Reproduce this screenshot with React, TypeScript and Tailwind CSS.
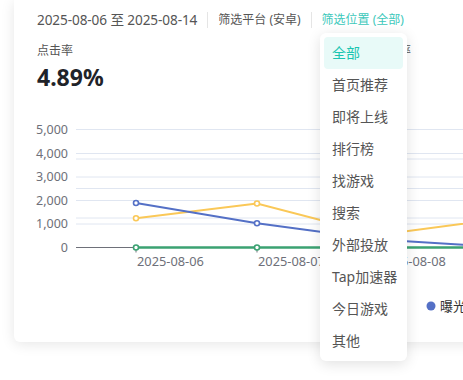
const FONT = { fontFamily: '"Noto Sans", "Noto Sans CJK SC", sans-serif' };

const positions = [
  "全部",
  "首页推荐",
  "即将上线",
  "排行榜",
  "找游戏",
  "搜索",
  "外部投放",
  "Tap加速器",
  "今日游戏",
  "其他",
];

const leftGrid = [130.5, 154.5, 178, 201.5, 225];
const rightGrid = [160, 189.5, 219];
const yLabels = ["5,000", "4,000", "3,000", "2,000", "1,000", "0"];
const xTicks = [136, 257, 378];

const blue = [
  [136, 204],
  [257, 224.3],
  [378, 240.5],
  [499, 248],
];
const yellow = [
  [136, 219.3],
  [257, 204.5],
  [378, 236],
  [499, 220],
];

const toPath = (pts: number[][]) => pts.map((p, i) => `${i ? "L" : "M"}${p[0]} ${p[1]}`).join(" ");

const Chart = () => {
  return (
    <svg width={449} height={210} viewBox="14 110 449 210" className="block" style={FONT}>
      {leftGrid.map((y) => (
        <line key={y} x1={76} x2={470} y1={y} y2={y} stroke="#e0e6f1" strokeWidth={1} />
      ))}
      {rightGrid.map((y) => (
        <line key={y} x1={76} x2={470} y1={y} y2={y} stroke="#e0e6f1" strokeWidth={1} />
      ))}
      <line x1={76} x2={470} y1={248.5} y2={248.5} stroke="#6e7079" strokeWidth={1} />
      {xTicks.map((x) => (
        <line key={x} x1={x} x2={x} y1={248.5} y2={253.5} stroke="#6e7079" strokeWidth={1} />
      ))}
      {yLabels.map((t, i) => (
        <text key={t} x={68} y={130.5 + i * 23.6} textAnchor="end" dominantBaseline="central" fontSize={12.5} fill="#6e7079">
          {t}
        </text>
      ))}
      {xTicks.map((x, i) => (
        <text key={x} x={x + 1} y={262} dominantBaseline="central" fontSize={12.8} fill="#6e7079">
          {`2025-08-0${6 + i}`}
        </text>
      ))}
      <path d={toPath(yellow)} fill="none" stroke="#fac858" strokeWidth={2} />
      <path d={toPath(blue)} fill="none" stroke="#5470c6" strokeWidth={2} />
      <path d="M136 248.5 L499 248.5" fill="none" stroke="#3ba272" strokeWidth={2.5} />
      {yellow.slice(0, 3).map(([x, y]) => (
        <circle key={x} cx={x} cy={y} r={2.5} fill="#fff" stroke="#fac858" strokeWidth={1.6} />
      ))}
      {blue.slice(0, 3).map(([x, y]) => (
        <circle key={x} cx={x} cy={y} r={2.5} fill="#fff" stroke="#5470c6" strokeWidth={1.6} />
      ))}
      {xTicks.map((x) => (
        <circle key={x} cx={x} cy={248.5} r={2.5} fill="#fff" stroke="#3ba272" strokeWidth={1.6} />
      ))}
      <circle cx={431} cy={307} r={4.5} fill="#5470c6" />
      <text x={440} y={307} dominantBaseline="central" fontSize={13} fill="#333">
        曝光量
      </text>
    </svg>
  );
};

const PositionMenu = () => {
  return (
    <div className="absolute left-[320px] top-[33px] w-[87px] rounded-md bg-white p-1 shadow-[0_3px_14px_rgba(0,0,0,0.12)]">
      {positions.map((p, i) => (
        <div
          key={p}
          className={
            i === 0
              ? "h-8 flex items-center pl-2 text-sm rounded-sm bg-[#e8faf8] text-[#1bc5b1]"
              : "h-8 flex items-center pl-2 text-sm text-[#555]"
          }
        >
          {p}
        </div>
      ))}
    </div>
  );
};

export default function App() {
  return (
    <div className="relative w-[463px] h-[380px] overflow-hidden bg-white" style={FONT}>
      <div className="ml-[14px] w-[480px] h-[342px] bg-white rounded-b-md shadow-[0_2px_14px_rgba(0,0,0,0.1)] overflow-hidden">
        <div className="pl-[23px] pt-[10px]">
          <div className="flex items-center h-5 text-[#555]">
            <span className="text-[13.6px] tracking-[-0.1px]">2025-08-06 至 2025-08-14</span>
            <span className="mx-[10px] h-4 w-px bg-[#e5e5e5]" />
            <span className="text-xs">筛选平台 (安卓)</span>
            <span className="mx-[10px] h-4 w-px bg-[#e5e5e5]" />
            <span className="text-xs text-[#3cc8bb]">筛选位置 (全部)</span>
          </div>
          <div className="flex mt-3">
            <div className="w-[338px]">
              <div className="text-xs leading-[18px] text-[#555]">点击率</div>
              <div className="text-[23px] font-bold leading-8 mt-px text-[#1f2329]">4.89%</div>
            </div>
            <div>
              <div className="text-xs leading-[18px] text-[#555]">曝光率</div>
            </div>
          </div>
        </div>
        <div className="mt-[16px]">
          <Chart />
        </div>
      </div>
      <PositionMenu />
    </div>
  );
}
